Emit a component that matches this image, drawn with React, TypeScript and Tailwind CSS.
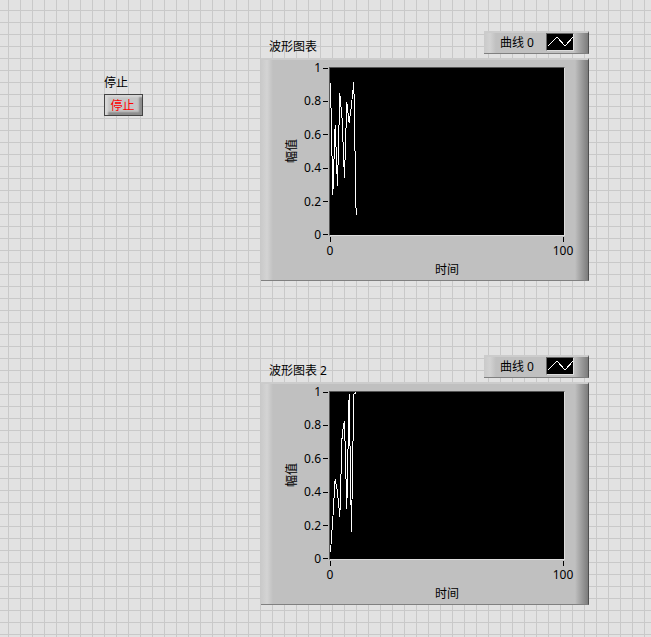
type Point = [number, number];

const first: Point[] = [
  [0, 0.91], [1, 0.24], [2, 0.66], [3, 0.29], [4, 0.85], [5, 0.69],
  [6, 0.34], [7, 0.8], [8, 0.67], [9, 0.78], [10, 0.92], [11, 0.12],
];
const second: Point[] = [
  [0, 0.04], [1, 0.24], [2, 0.48], [3, 0.4], [4, 0.25], [5, 0.75],
  [6, 0.83], [7, 0.3], [8, 0.99], [9, 0.16], [10, 0.99], [11, 1],
];

function Legend() {
  return (
    <div className="flex h-[23px] items-start border-t-2 border-r border-b border-t-[#cccccc] border-r-[#505050] border-b-[#808080] bg-[#c0c0c0]">
      <div className="h-full w-3 bg-linear-to-r from-[#cacaca] via-[#d2d2d2] to-[#c0c0c0]" />
      <span className="mt-0.5 ml-1 w-[46px] leading-4 whitespace-nowrap">曲线 0</span>
      <svg
        className="h-[18px] w-7 border-t border-r border-b border-l border-t-[#666] border-r-[#ddd] border-b-[#ddd] border-l-[#666] bg-black"
        viewBox="0 0 26 16"
        shapeRendering="crispEdges"
        aria-hidden="true"
      >
        <path d="M1 12 L10 3 L18 12 L26 3" fill="none" stroke="#fff" />
      </svg>
      <div className="h-full w-3.5 bg-linear-to-r from-[#c0c0c0] to-[#7c7c7c]" />
    </div>
  );
}

function Chart({ title, points }: { title: string; points: Point[] }) {
  const path = points.map(([x, y]) => `${x * 2.34 + 0.5},${(1 - y) * 166 + 0.5}`).join(" ");
  return (
    <section>
      <header className="flex h-[27px] items-start justify-between pl-2">
        <h2 className="mt-2 leading-4">{title}</h2>
        <Legend />
      </header>
      <div className="flex h-[223px] border-t-2 border-r border-b border-t-[#cccccc] border-r-[#505050] border-b-[#808080] bg-[#c0c0c0]">
        <div className="w-3 shrink-0 bg-linear-to-r from-[#cacaca] via-[#d4d4d4] to-[#c0c0c0]" />
        <div className="flex h-[183px] w-[38px] shrink-0 items-center justify-center">
          <span className="rotate-180 leading-4 [text-orientation:sideways] [writing-mode:vertical-rl]">幅值</span>
        </div>
        <div className="flex h-[183px] w-[18px] shrink-0 flex-col justify-between">
          {["1", "0.8", "0.6", "0.4", "0.2", "0"].map((v) => (
            <div key={v} className="flex h-4 items-center justify-end gap-0.5">
              <span className="leading-4">{v}</span>
              <span className="mr-px h-px w-[5px] shrink-0 bg-black" />
            </div>
          ))}
        </div>
        <div className="min-w-0 flex-1 pt-[7px]">
          <svg
            className="block h-[169px] w-full border-t border-r border-b border-l border-t-[#555] border-r-[#ddd] border-b-[#ddd] border-l-[#555] bg-black"
            viewBox="0 0 235 167"
            preserveAspectRatio="none"
            shapeRendering="crispEdges"
            role="img"
            aria-label={title}
          >
            <polyline points={path} fill="none" stroke="#fff" vectorEffect="non-scaling-stroke" />
          </svg>
          <div className="mt-px -mr-2.5 -ml-[11px] flex justify-between">
            {["0", "100"].map((v) => (
              <div key={v} className="flex w-6 flex-col items-center">
                <span className="h-[5px] w-px bg-black" />
                <span className="mt-px leading-4">{v}</span>
              </div>
            ))}
          </div>
          <p className="mt-[3px] text-center leading-4">时间</p>
        </div>
        <div className="ml-2.5 w-[13px] shrink-0 bg-linear-to-r from-[#c0c0c0] to-[#7c7c7c]" />
      </div>
    </section>
  );
}

export default function App() {
  return (
    <main className="flex min-h-screen bg-[#e2e2e2] bg-[linear-gradient(to_right,#c9c9c9_1px,transparent_1px),linear-gradient(to_bottom,#c9c9c9_1px,transparent_1px)] bg-size-[12px_12px] bg-position-[8px_10px] pt-[31px] pr-[62px] pb-8 pl-[104px] font-['Noto_Sans','Noto_Sans_CJK_SC',sans-serif] text-xs text-black">
      <div className="w-[157px] shrink-0 pt-11">
        <label htmlFor="stop" className="block leading-4">停止</label>
        <button
          id="stop"
          type="button"
          className="mt-[3px] flex h-[22px] w-[39px] items-center justify-center border border-[#444] bg-[#c6c6c6] pt-0.5 pr-0.5 leading-4 text-[#ff0000] shadow-[inset_3px_2px_2px_#d8d8d8,inset_-3px_-3px_2px_#8c8c8c]"
        >
          停止
        </button>
      </div>
      <div className="flex min-w-0 flex-1 flex-col gap-[74px]">
        <Chart title="波形图表" points={first} />
        <Chart title="波形图表 2" points={second} />
      </div>
    </main>
  );
}
